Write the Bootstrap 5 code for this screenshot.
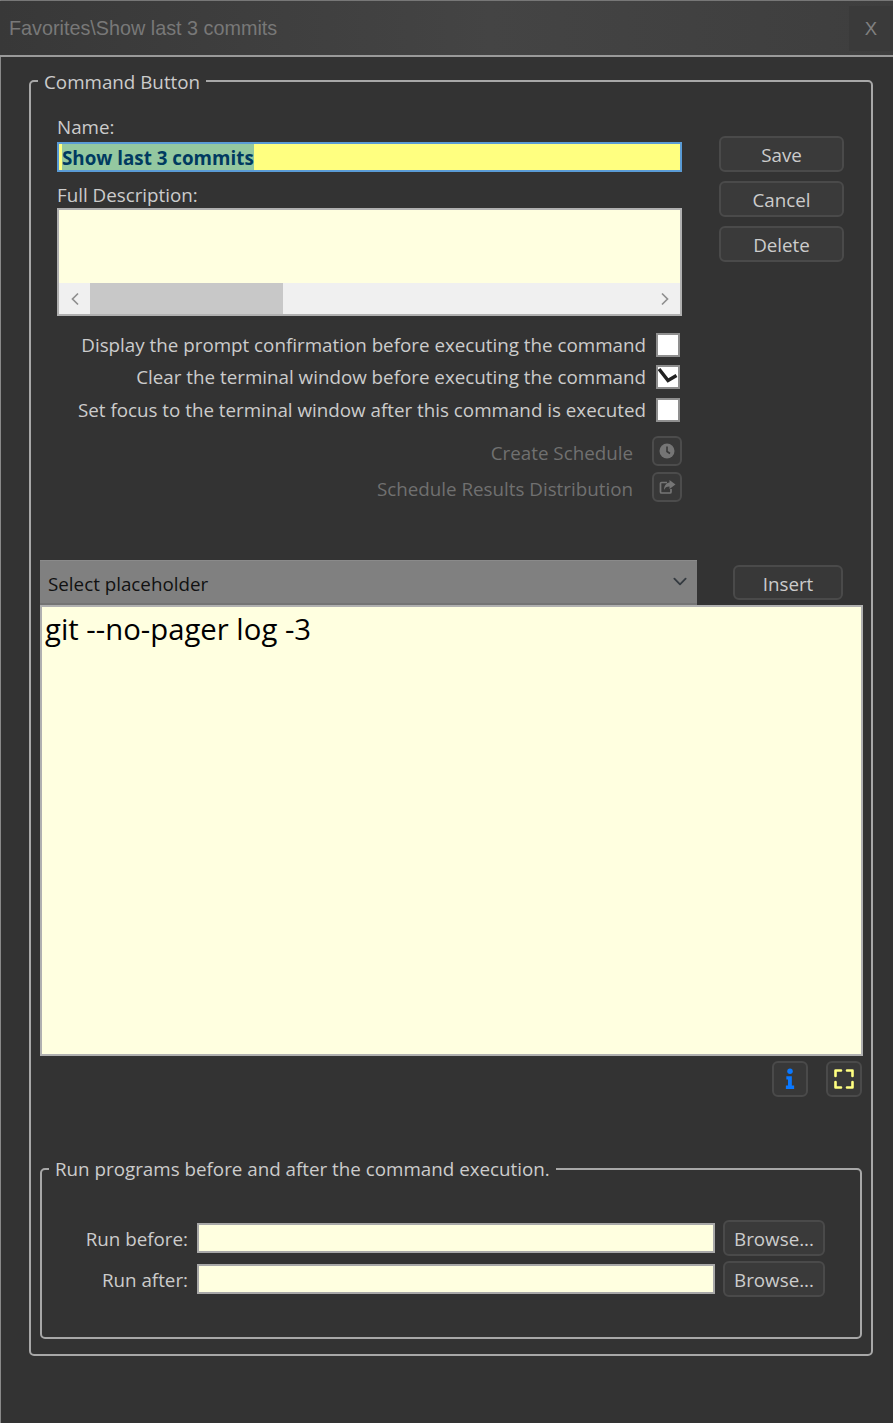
<!DOCTYPE html>
<html lang="en">
<head>
<meta charset="utf-8">
<title>Command Button</title>
<link href="https://cdn.jsdelivr.net/npm/bootstrap@5.3.0/dist/css/bootstrap.min.css" rel="stylesheet">
<style>
html,body{height:100%;}
body{background:#333;color:#cccccc;font-family:"Open Sans","Noto Sans",sans-serif;font-size:18.8px;line-height:24px;overflow:hidden;}
.win{height:1423px;border-left:1px solid #8a8a8a;border-top:1px solid #777;margin:0;}
.titlebar{height:56px;margin-left:-1px;background:linear-gradient(to right,#383838,#444 55%,#3e3e3e);border-bottom:2px solid #9a9a9a;}
.title-text{font-family:"Liberation Sans",sans-serif;font-size:19.8px;color:#787878;padding-left:9px;}
.close-x{width:44px;height:45px;margin-top:5px;background:#3a3a3a;color:#808080;font-family:"Liberation Sans",sans-serif;font-size:18.5px;}
.body-area{padding:10px 20px 0 28px;}
fieldset.grp{border:2px solid #a8a8a8;border-radius:5px;}
.grp-outer{height:1289px;padding:0;}
legend.grp-legend{float:none;width:auto;margin:0 0 0 7px;padding:0 6px;font-size:18.8px;line-height:24px;color:#cccccc;}
legend.legend-outer{padding-top:3px;}
.top-row{padding-left:26px;}
.left-col{width:625px;}
.lbl{height:24px;}
.lbl-name{margin-top:21px;}
.lbl-desc{margin-top:11px;}
.name-box{height:30px;margin-top:3px;border:2px solid #5a9bd5;border-radius:0;background:#ffff80;padding:0 3px;font-weight:700;font-size:18.8px;line-height:28px;color:#003a60;}
.name-sel{background:#94c8a0;display:inline-block;height:26px;vertical-align:top;}
.desc-box{height:108px;margin-top:1px;border:2px solid #b0b0b0;background:#ffffe0;}
.hbar{height:31px;background:#f0f0f0;color:#8a8a8a;}
.hbar-end{width:31px;}
.hbar-thumb{width:193px;background:#c8c8c8;}
.chk-first{margin-top:12.7px;}
.chk-row{height:32.5px;padding-right:2px;}
.chk-box{width:24px;height:24px;background:#fff;border:2px solid #8f8f8f;margin-left:10px;flex:none;}
.sched-first{margin-top:6.8px;}
.sched-row{height:36px;color:#707070;}
.sched-txt{padding-top:5px;}
.btn-ico{width:30px;height:30px;border:2px solid #4c4c4c;border-radius:6px;margin-left:19px;background:#383838;}
.side-col{width:125px;margin-left:37px;padding-top:42px;gap:9px;}
.btn-dark-ui{height:36px;padding:2px 0 0;background:#3a3a3a;border:2px solid #4a4a4a;border-radius:6px;color:#cccccc;font-size:18.8px;line-height:24px;width:100%;}
.btn-dark-ui:hover{background:#3a3a3a;border-color:#4a4a4a;color:#cccccc;}
.ph-row{margin-top:55px;padding-left:9px;}
.ph-select{width:657px;height:45px;border:0;border-top:1px solid #8a8a8a;border-bottom:2px solid #747474;border-radius:0;background-color:#808080;color:#111;font-size:18.8px;line-height:24px;padding:4px 30px 0 8px;background-position:right 7px center;background-size:20px 15px;}
.ins-btn{width:110px;height:35px;margin-left:36px;margin-top:5px;padding-top:4px;background:#383838;}
.cmd-box{display:block;width:823px;height:451px;margin-left:9px;border:2px solid #b0b0b0;border-radius:0;background:#ffffe0;color:#000;font-size:29.3px;line-height:36px;padding:4px 3px;resize:none;}
.tool-row{margin:5px 9px 0 0;gap:18px;}
.tool-btn{width:36px;height:36px;border:2px solid #4a4a4a;border-radius:6px;background:#383838;}
.grp-inner{margin:60px 0 0 9px;width:822px;height:182px;padding:0;}
.run-row{height:41.5px;}
.run-first{margin-top:36px;}
.run-lbl{width:146px;text-align:right;margin-right:9px;flex:none;padding-top:2px;}
.run-input{width:518px;height:30px;flex:none;border:2px solid #a8a8a8;border-radius:0;background:#ffffe0;padding:0 4px;}
.browse-btn{width:102px;height:36px;margin-left:8px;flex:none;}
</style>
</head>
<body>
<div class="win">
  <div class="titlebar d-flex justify-content-between">
    <div class="title-text d-flex align-items-center">Favorites\Show last 3 commits</div>
    <div class="close-x d-flex align-items-center justify-content-center">X</div>
  </div>
  <div class="body-area">
    <fieldset class="grp grp-outer">
      <legend class="grp-legend legend-outer">Command Button</legend>
      <div class="d-flex top-row">
        <div class="left-col">
          <div class="lbl lbl-name">Name:</div>
          <div class="name-box"><span class="name-sel">Show last 3 commits</span></div>
          <div class="lbl lbl-desc">Full Description:</div>
          <div class="desc-box d-flex flex-column">
            <div class="flex-grow-1"></div>
            <div class="hbar d-flex">
              <div class="hbar-end d-flex align-items-center justify-content-center"><svg width="10" height="14" viewBox="0 0 10 14"><path d="M8 1.500 2.500 7 8 12.500" fill="none" stroke="#8f8f8f" stroke-width="1.700"/></svg></div>
              <div class="hbar-thumb"></div>
              <div class="flex-grow-1"></div>
              <div class="hbar-end d-flex align-items-center justify-content-center"><svg width="10" height="14" viewBox="0 0 10 14"><path d="M2 1.500 7.500 7 2 12.500" fill="none" stroke="#8f8f8f" stroke-width="1.700"/></svg></div>
            </div>
          </div>
          <div class="chk-row chk-first d-flex align-items-center justify-content-end">Display the prompt confirmation before executing the command<span class="chk-box"></span></div>
          <div class="chk-row d-flex align-items-center justify-content-end">Clear the terminal window before executing the command<span class="chk-box d-flex align-items-center justify-content-center"><svg width="20" height="20" viewBox="0 0 20 20"><path d="M1 2 10 13.500 18.500 8.500" fill="none" stroke="#222" stroke-width="3.500"/></svg></span></div>
          <div class="chk-row d-flex align-items-center justify-content-end">Set focus to the terminal window after this command is executed<span class="chk-box"></span></div>
          <div class="sched-row sched-first d-flex align-items-center justify-content-end"><span class="sched-txt">Create Schedule</span><span class="btn-ico d-flex align-items-center justify-content-center"><svg width="16" height="16" viewBox="0 0 16 16"><circle cx="8" cy="8" r="7.500" fill="#757575"/><path d="M8 3.500V8.500L11 10.500" fill="none" stroke="#383838" stroke-width="1.600"/></svg></span></div>
          <div class="sched-row d-flex align-items-center justify-content-end"><span class="sched-txt">Schedule Results Distribution</span><span class="btn-ico d-flex align-items-center justify-content-center"><svg width="17" height="16" viewBox="0 0 17 16"><path d="M8 3.500H2.500a1 1 0 0 0-1 1V13a1 1 0 0 0 1 1H11a1 1 0 0 0 1-1V10" fill="none" stroke="#757575" stroke-width="1.700"/><path d="M10.500 1 16.500 5.500 10.500 10V7.500C7.500 7.500 6 8.500 5 11 5 7 7 4 10.500 3.500Z" fill="#757575"/></svg></span></div>
        </div>
        <div class="side-col d-flex flex-column">
          <button type="button" class="btn btn-dark-ui">Save</button>
          <button type="button" class="btn btn-dark-ui">Cancel</button>
          <button type="button" class="btn btn-dark-ui">Delete</button>
        </div>
      </div>
      <div class="d-flex align-items-start ph-row">
        <select class="form-select ph-select"><option>Select placeholder</option></select>
        <button type="button" class="btn btn-dark-ui ins-btn">Insert</button>
      </div>
      <textarea class="form-control cmd-box" spellcheck="false">git --no-pager log -3</textarea>
      <div class="d-flex justify-content-end tool-row">
        <div class="tool-btn d-flex align-items-center justify-content-center"><svg width="10" height="22" viewBox="0 0 10 24"><circle cx="5" cy="3.500" r="3" fill="#0a78ff"/><path d="M1 9H7V19H9.500V23H0.500V19H2.800V12.500H1Z" fill="#0a78ff"/></svg></div>
        <div class="tool-btn d-flex align-items-center justify-content-center"><svg width="20" height="20" viewBox="0 0 20 20"><path d="M1.500 7V1.500H7M13 1.500H18.500V7M18.500 13V18.500H13M7 18.500H1.500V13" fill="none" stroke="#ffff80" stroke-width="2.600" stroke-linejoin="round" stroke-linecap="round"/></svg></div>
      </div>
      <fieldset class="grp grp-inner">
        <legend class="grp-legend">Run programs before and after the command execution.</legend>
        <div class="run-row run-first d-flex align-items-center"><span class="run-lbl">Run before:</span><input class="form-control run-input" type="text" aria-label="Run before"><button type="button" class="btn btn-dark-ui browse-btn">Browse...</button></div>
        <div class="run-row d-flex align-items-center"><span class="run-lbl">Run after:</span><input class="form-control run-input" type="text" aria-label="Run after"><button type="button" class="btn btn-dark-ui browse-btn">Browse...</button></div>
      </fieldset>
    </fieldset>
  </div>
</div>
<script src="https://cdn.jsdelivr.net/npm/bootstrap@5.3.0/dist/js/bootstrap.bundle.min.js"></script>
</body>
</html>
